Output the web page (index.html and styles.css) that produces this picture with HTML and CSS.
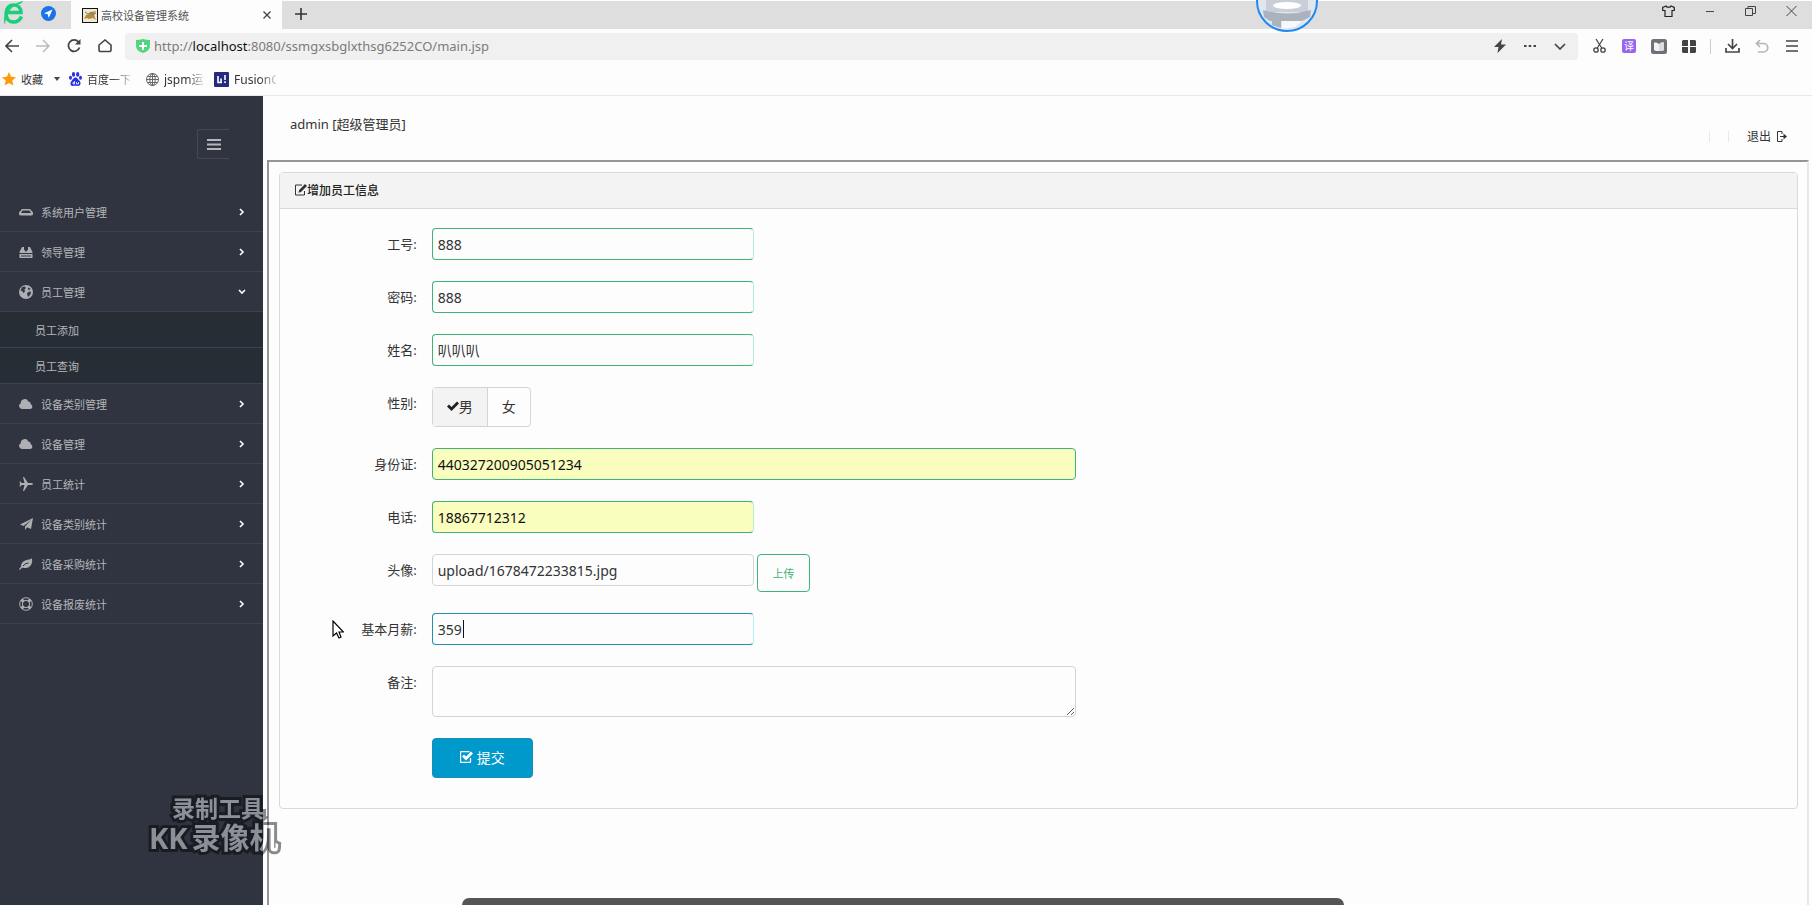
FILE: index.html
```html
<!DOCTYPE html>
<html lang="zh-CN">
<head>
    <meta charset="UTF-8">
    <meta name="viewport" content="width=device-width, initial-scale=1.0">
    <title>高校设备管理系统</title>
    <link rel="stylesheet" href="styles.css">
</head>
<body>
    <header class="browser">
        <div class="tabbar">
            <div class="pinned">
                <svg class="logo" width="21" height="24" viewBox="0 0 21 24"><g fill="none" stroke="#19cf79" stroke-width="3.500"><path d="M18.500 15.500c-1.500 3.500-4.500 5.500-8 5.500C6 21 3 17.500 3 12.500S6 4 10.500 4s7.500 3 7.500 7.500H4"/></g><path d="M2 24C-2 15 6 3 20 0c-1 3-4 3-7 4C8 6 3 13 2 24z" fill="#19cf79"/></svg>
                <svg width="15" height="15" viewBox="0 0 15 15"><circle cx="7.500" cy="7.500" r="7.500" fill="#1a73e8"/><path d="M11.500 3.500 3 7.300l3.700 1L7.700 12z" fill="#fff"/></svg>
            </div>
            <div class="tab">
                <svg width="16" height="15" viewBox="0 0 16 15"><rect x=".5" y=".5" width="15" height="14" fill="#eee8d8" stroke="#111"/><path d="M2 11l2-4 3-1 2-2 5-1-2 4 2 5-3-2-4 1-2-1z" fill="#b58c3a"/><path d="M3 4l3 2 3-2 2 3 3-2" stroke="#857a6a" fill="none"/></svg>
                <span class="tab-title">高校设备管理系统</span>
                <button class="icon-btn" aria-label="关闭标签"><svg width="8" height="8" viewBox="0 0 8 8"><path d="M.5.5l7 7M7.500.5l-7 7" stroke="#444" stroke-width="1.300"/></svg></button>
            </div>
            <button class="icon-btn new-tab" aria-label="新标签"><svg width="12" height="12" viewBox="0 0 12 12"><path d="M6 0v12M0 6h12" stroke="#333" stroke-width="1.600"/></svg></button>
            <div class="window-btns">
                <button class="icon-btn" aria-label="皮肤"><svg width="13" height="12" viewBox="0 0 13 12"><path d="M4 1 .7 2.500v3H3v6h7v-6h2.300v-3L9 1 8 2.200H5z" fill="none" stroke="#222" stroke-width="1.200"/></svg></button>
                <button class="icon-btn" aria-label="最小化"><svg width="10" height="10" viewBox="0 0 10 10"><path d="M1 5.500h8" stroke="#444"/></svg></button>
                <button class="icon-btn" aria-label="还原"><svg width="11" height="10" viewBox="0 0 11 10"><path d="M.5 2.500h7v7h-7zM3 2.500v-2h7.500v7h-3" fill="none" stroke="#444"/></svg></button>
                <button class="icon-btn" aria-label="关闭"><svg width="11" height="10" viewBox="0 0 11 10"><path d="M.5 0l10 10M10.500 0l-10 10" stroke="#444"/></svg></button>
            </div>
            <svg class="avatar" width="62" height="33" viewBox="0 0 62 33"><circle cx="31" cy="1" r="29.500" fill="#e1e6ec"/><path d="M10 0h42v12H10z" fill="#c9cfd8"/><path d="M7 10q24 7 48 0l-1 7-8 4H14l-6-4z" fill="#a9b2bd"/><ellipse cx="31" cy="5.500" rx="14" ry="3.500" fill="#fff"/><path d="M16 19h9v9l-9-3z" fill="#a9b2bd"/><path d="M26 21h20l-7 6-13 2z" fill="#f6f8fa"/><circle cx="31" cy="1" r="30" fill="none" stroke="#1e88f5" stroke-width="2"/></svg>
        </div>

        <div class="toolbar">
            <div class="nav-btns">
                <button class="icon-btn" aria-label="后退"><svg width="14" height="14" viewBox="0 0 14 14"><path d="M14 7H1M7 1 1 7l6 6" fill="none" stroke="#444" stroke-width="1.600"/></svg></button>
                <button class="icon-btn" aria-label="前进"><svg width="14" height="14" viewBox="0 0 14 14"><path d="M0 7h13M7 1l6 6-6 6" fill="none" stroke="#bbb" stroke-width="1.500"/></svg></button>
                <button class="icon-btn" aria-label="刷新"><svg width="14" height="14" viewBox="0 0 14 14"><path d="M12.500 8.500A5.700 5.700 0 1 1 11.500 3" fill="none" stroke="#444" stroke-width="1.800"/><path d="M13.500 0v5.500H8z" fill="#444"/></svg></button>
                <button class="icon-btn" aria-label="主页"><svg width="14" height="14" viewBox="0 0 14 14"><path d="M3.500 12.500h-1a1.500 1.500 0 0 1-1.500-1.500V6l6-5 6 5v5a1.500 1.500 0 0 1-1.500 1.500z" fill="none" stroke="#444" stroke-width="1.600"/></svg></button>
            </div>
            <div class="address">
                <svg width="14" height="14" viewBox="0 0 14 14"><path d="M0 1q4 0 7-1 3 1 7 1v6q0 5-7 7-7-2-7-7z" fill="#4fd67f"/><path d="M7 3v8M3 7h8" stroke="#fff" stroke-width="2"/></svg>
                <span class="url">http://<b>localhost</b>:8080/ssmgxsbglxthsg6252CO/main.jsp</span>
                <div class="address-btns">
                    <button class="icon-btn" aria-label="极速模式"><svg width="12" height="14" viewBox="0 0 12 14"><path d="M8 0 0 8h4.500L3.500 14 12 5.500H7z" fill="#444"/></svg></button>
                    <button class="icon-btn" aria-label="更多"><svg width="14" height="4" viewBox="0 0 14 4"><path d="M1 1h2.500v2H1zM5.700 1h2.500v2H5.700zM10.500 1H13v2h-2.500z" fill="#444"/></svg></button>
                    <button class="icon-btn" aria-label="展开"><svg width="12" height="7" viewBox="0 0 12 7"><path d="M1 1l5 5 5-5" fill="none" stroke="#444" stroke-width="1.700"/></svg></button>
                </div>
            </div>
            <div class="tools">
                <button class="icon-btn" aria-label="截图"><svg width="13" height="14" viewBox="0 0 13 14"><path d="M3 0l6 9.500M10 0 4 9.500" stroke="#444" stroke-width="1.200"/><g fill="none" stroke="#444" stroke-width="1.300"><circle cx="3" cy="11" r="2.200"/><circle cx="10" cy="11" r="2.200"/></g></svg></button>
                <button class="icon-btn translate">译</button>
                <button class="icon-btn" aria-label="阅读"><svg width="16" height="15" viewBox="0 0 16 15"><rect width="16" height="15" rx="2.500" fill="#707077"/><path d="M3 3.500h2.500L8 5l2.500-1.500H13V11l-2 1H5l-2-1z" fill="#f2f2f2"/><path d="M8 5l2.500-1.500H13V11l-2 1H8z" fill="#dcdcdf"/></svg></button>
                <button class="icon-btn" aria-label="应用"><svg width="14" height="13" viewBox="0 0 14 13"><path d="M1 0h5v6H0V1zM8 0h5l1 1v5H8zM0 7h6v6H1l-1-1zM8 7h6v5l-1 1H8z" fill="#444"/></svg></button>
                <span class="tool-line"></span>
                <button class="icon-btn" aria-label="下载"><svg width="15" height="14" viewBox="0 0 15 14"><path d="M7.500 0v9M3 5l4.500 4.500L12 5M1 9v4h13V9" fill="none" stroke="#444" stroke-width="1.700"/></svg></button>
                <button class="icon-btn" aria-label="撤销"><svg width="14" height="13" viewBox="0 0 14 13"><path d="M5 0 1.500 3.500 5 7M1.500 3.500H8.500a4 4 0 0 1 0 8.500H3" fill="none" stroke="#b5b5b5" stroke-width="1.700"/></svg></button>
                <button class="icon-btn" aria-label="菜单"><svg width="12" height="12" viewBox="0 0 12 12"><path d="M0 1h12M0 6h12M0 11h12" stroke="#444" stroke-width="1.600"/></svg></button>
            </div>
        </div>

        <nav class="bookmarks">
            <a class="mark mark-fav" href="#"><svg width="14" height="14" viewBox="0 0 14 14"><path d="M7 0l2.100 4.700 4.900.5-3.700 3.300 1.100 5L7 11l-4.400 2.500 1.100-5L0 5.200l4.900-.5z" fill="#ff9a0c"/></svg>收藏<i class="caret"></i></a>
            <a class="mark mark-baidu" href="#"><svg width="13" height="14" viewBox="0 0 13 14"><g fill="#2b32dc"><ellipse cx="4.500" cy="2.400" rx="1.600" ry="2.300"/><ellipse cx="8.700" cy="2.400" rx="1.600" ry="2.300"/><ellipse cx="1.500" cy="5.700" rx="1.500" ry="2"/><ellipse cx="11.500" cy="5.700" rx="1.500" ry="2"/><path d="M6.500 5.500c2 0 2.500 2 4 3.300 2 2 1 5.200-1.500 5.200-1.500 0-3.500-.5-5 0C1.500 14.500.5 11 2.500 9 4 7.500 4.500 5.500 6.500 5.500z"/></g><path d="M5.500 9v3H4v-1.500h1.500M7.500 10v2h2v-2" fill="none" stroke="#fff" stroke-width=".8"/></svg><span class="mark-text">百度一下</span></a>
            <a class="mark mark-jspm" href="#"><svg width="13" height="13" viewBox="0 0 13 13"><g fill="none" stroke="#666"><circle cx="6.500" cy="6.500" r="6"/><ellipse cx="6.500" cy="6.500" rx="2.700" ry="6"/><path d="M.5 6.500h12M6.500.5v12M1.500 3.500h10M1.500 9.500h10"/></g></svg><span class="mark-text">jspm运</span></a>
            <a class="mark mark-fusion" href="#"><svg width="15" height="15" viewBox="0 0 15 15"><rect width="15" height="15" rx="1" fill="#242a7c"/><path d="M4 4v6.500h4M7 6.500v4M11 3v5M11 9.300V11" fill="none" stroke="#fff" stroke-width="1.600"/></svg><span class="mark-text">FusionC</span></a>
        </nav>
    </header>

    <div class="page">
        <aside class="sidebar">
            <button class="menu-toggle" aria-label="菜单"><svg width="14" height="11" viewBox="0 0 14 11"><path d="M0 1h14M0 5.500h14M0 10h14" stroke="#b4b6ba" stroke-width="2"/></svg></button>
            <nav class="menu">
                <a href="#"><svg class="icon" viewBox="0 0 14 14"><path d="M3 4h8l3 3.500V9q0 1.500-2 1.500H2Q0 10.500 0 9V7.500zM3.500 5.500 2 8h10l-1.500-2.500z" fill-rule="evenodd"/></svg>系统用户管理<svg class="arrow" viewBox="0 0 8 8"><path d="M2 1l3 3-3 3"/></svg></a>
                <a href="#"><svg class="icon" viewBox="0 0 14 14"><path d="M3 2h2v2.500L7 7l2-2.500V2h2l2.500 5v1H.5V7zM.5 9h13v4H.5zM2 10.500h10v1H2z" fill-rule="evenodd"/></svg>领导管理<svg class="arrow" viewBox="0 0 8 8"><path d="M2 1l3 3-3 3"/></svg></a>
                <a href="#"><svg class="icon" viewBox="0 0 14 14"><circle cx="7" cy="7" r="7"/><path d="M3 2l3-.5L7 3 5.500 4.500 6 6.500 4.500 8 3 6 1.500 5.500zM9 2.500l2.500 1L10 5.500 9 4zM9 7l3-.5-.5 3L9 12 8 9z" fill="#343844"/></svg>员工管理<svg class="arrow" viewBox="0 0 8 8"><path d="M1 2l3 3 3-3"/></svg></a>
                <div class="submenu">
                    <a href="#">员工添加</a>
                    <a href="#">员工查询</a>
                </div>
                <a href="#"><svg class="icon" viewBox="0 0 14 14"><path d="M3 12a3 3 0 0 1-1.200-5.700A3.900 3.900 0 0 1 9.300 4.500a2.200 2.200 0 0 1 2.300 2.700A2.500 2.500 0 0 1 11.500 12z"/></svg>设备类别管理<svg class="arrow" viewBox="0 0 8 8"><path d="M2 1l3 3-3 3"/></svg></a>
                <a href="#"><svg class="icon" viewBox="0 0 14 14"><path d="M3 12a3 3 0 0 1-1.200-5.700A3.900 3.900 0 0 1 9.300 4.500a2.200 2.200 0 0 1 2.300 2.700A2.500 2.500 0 0 1 11.500 12z"/></svg>设备管理<svg class="arrow" viewBox="0 0 8 8"><path d="M2 1l3 3-3 3"/></svg></a>
                <a href="#"><svg class="icon" viewBox="0 0 14 14"><path d="M14 7q0 1-2 1H9l-4 6H4l1.500-6h-3L1.500 9.500H.5L1 7 .5 4.500h1L2.500 6h3L4 0h1l4 6h3q2 0 2 1z"/></svg>员工统计<svg class="arrow" viewBox="0 0 8 8"><path d="M2 1l3 3-3 3"/></svg></a>
                <a href="#"><svg class="icon" viewBox="0 0 14 14"><path d="M14 1l-2 11-4-1.700L6 13V9.500L12 3 4.500 9 1 7.500z"/></svg>设备类别统计<svg class="arrow" viewBox="0 0 8 8"><path d="M2 1l3 3-3 3"/></svg></a>
                <a href="#"><svg class="icon" viewBox="0 0 14 14"><path d="M13 1.500c1 5-2 9.500-6 9.500-2 0-3-.5-4-.3L1 13 0 12.300l2-2.800C2 4 7 3 10 2.500c2-.5 2-1 3-1z"/><path d="M4 9q2-3 5.500-3" stroke="#2f3440" fill="none"/></svg>设备采购统计<svg class="arrow" viewBox="0 0 8 8"><path d="M2 1l3 3-3 3"/></svg></a>
                <a href="#"><svg class="icon" viewBox="0 0 14 14"><g fill="none" stroke="#adafb2"><circle cx="7" cy="7" r="6.300"/><circle cx="7" cy="7" r="3.700"/><path d="M2.500 2.500 4.700 4.700M11.500 2.500 9.300 4.700M2.500 11.500l2.200-2.200M11.500 11.500 9.300 9.300" stroke-width="3"/></g></svg>设备报废统计<svg class="arrow" viewBox="0 0 8 8"><path d="M2 1l3 3-3 3"/></svg></a>
            </nav>
        </aside>

        <main class="main">
            <div class="userbar">
                <div class="user">admin [超级管理员]</div>
                <div class="user-links">
                    <span class="line"></span>
                    <span class="line"></span>
                    <a href="#">退出 <svg width="11" height="11" viewBox="0 0 11 11"><path d="M6 .5H1.500v10H6M6 .5V3M6 8v2.500M4 5.500h5" fill="none" stroke="#333"/><path d="M7.500 2.500 11 5.500l-3.500 3z" fill="#333"/></svg></a>
                </div>
            </div>

            <div class="frame">
                <section class="panel">
                    <h3 class="panel-title"><svg width="13" height="12" viewBox="0 0 13 12"><path d="M8 1H1.500v10h9V7" fill="none" stroke="#333"/><path d="M11 0l2 2-6 6-2.500.7L5.200 6z" fill="#333"/></svg>增加员工信息</h3>
                    <form class="panel-body">
                        <div class="form-group">
                            <label for="gonghao">工号:</label>
                            <div class="field"><input class="valid short" type="text" id="gonghao" value="888"></div>
                        </div>
                        <div class="form-group">
                            <label for="mima">密码:</label>
                            <div class="field"><input class="valid short" type="text" id="mima" value="888"></div>
                        </div>
                        <div class="form-group">
                            <label for="xingming">姓名:</label>
                            <div class="field"><input class="valid short" type="text" id="xingming" value="叭叭叭"></div>
                        </div>
                        <div class="form-group">
                            <label for="nan">性别:</label>
                            <div class="btn-group">
                                <input type="radio" name="xingbie" id="nan" checked>
                                <label for="nan"><svg width="12" height="10" viewBox="0 0 12 10"><path d="M0 5.500 2 3.500 4.500 6 10 .5 12 2.500 4.500 10z" fill="#222"/></svg>男</label>
                                <input type="radio" name="xingbie" id="nv">
                                <label for="nv">女</label>
                            </div>
                        </div>
                        <div class="form-group">
                            <label for="shenfenzheng">身份证:</label>
                            <div class="field"><input class="valid filled" type="text" id="shenfenzheng" value="440327200905051234"></div>
                        </div>
                        <div class="form-group">
                            <label for="dianhua">电话:</label>
                            <div class="field"><input class="valid filled short" type="text" id="dianhua" value="18867712312"></div>
                        </div>
                        <div class="form-group">
                            <label for="touxiang">头像:</label>
                            <div class="field"><input class="short" type="text" id="touxiang" value="upload/1678472233815.jpg"><button class="upload" type="button">上传</button></div>
                        </div>
                        <div class="form-group">
                            <label for="yuexin">基本月薪:</label>
                            <div class="field"><input class="active short" type="text" id="yuexin" value="359"><span class="text-cursor"></span></div>
                        </div>
                        <div class="form-group">
                            <label for="beizhu">备注:</label>
                            <div class="field"><textarea id="beizhu"></textarea></div>
                        </div>
                        <button class="submit" type="button"><svg width="13" height="12" viewBox="0 0 13 12"><path d="M10.500 7v3.500a1 1 0 0 1-1 1h-8a1 1 0 0 1-1-1v-9a1 1 0 0 1 1-1h8" fill="none" stroke="#fff" stroke-width="1.300"/><path d="M2 5.500l2-2L6 5.500 11 .5l2 2L6 9.500z" fill="#fff"/></svg>提交</button>
                    </form>
                </section>
            </div>
        </main>
    </div>

    <div class="watermark">
        <div class="wm-small">录制工具</div>
        <div class="wm-big"><span>KK</span><span>录像机</span></div>
    </div>
    <div class="bottom-bar"></div>
    <svg class="pointer" width="12" height="19" viewBox="0 0 12 19"><path d="M1 1v15l3.500-3L7 18l2-1-2-5h4.500z" fill="#fff" stroke="#000" stroke-width="1.200"/></svg>
</body>
</html>
```
FILE: styles.css
```css
* {
    box-sizing: border-box;
}
body {
    margin: 0;
    height: 100vh;
    display: flex;
    flex-direction: column;
    overflow: hidden;
    position: relative;
    background: #fdfdfd;
    color: #333;
    font-family: "Noto Sans", "Noto Sans CJK SC", sans-serif;
    font-size: 12px;
}
a {
    color: inherit;
    text-decoration: none;
}
svg {
    flex: none;
}
button, input, textarea {
    font-family: inherit;
}
.icon-btn {
    display: flex;
    justify-content: center;
    align-items: center;
    padding: 0;
    border: none;
    background: none;
}

/* browser */
.browser {
    border-bottom: 1px solid #e8e8e8;
}
.tabbar {
    display: flex;
    position: relative;
    height: 29px;
    border-top: 1px solid #fdfdfd;
    background: #dedede;
}
.pinned {
    display: flex;
    align-items: center;
    gap: 17px;
    width: 71px;
    padding: 0 0 4px 3px;
}
.tab {
    display: flex;
    align-items: center;
    gap: 3px;
    width: 211px;
    padding: 0 11px;
    background: #fdfdfd;
    font-size: 11px;
    color: #555;
}
.tab-title {
    flex: 1;
}
.new-tab {
    width: 38px;
    height: 26px;
}
.window-btns {
    display: flex;
    height: 20px;
    margin-left: auto;
}
.window-btns .icon-btn {
    width: 41px;
}
.avatar {
    position: absolute;
    top: -1px;
    left: 71%;
    margin-left: -31px;
    z-index: 1;
}
.toolbar {
    display: flex;
    align-items: center;
    height: 34px;
}
.nav-btns {
    display: flex;
    gap: 17px;
    width: 125px;
    padding-left: 5px;
}
.address {
    flex: 1;
    display: flex;
    align-items: center;
    gap: 4px;
    height: 27px;
    padding: 0 3px 0 11px;
    border-radius: 4px;
    background: #f0f0f0;
}
.url {
    flex: 1;
    font-size: 13px;
    color: #7b7b7b;
}
.url b {
    font-weight: normal;
    color: #111;
}
.address-btns, .tools {
    display: flex;
    align-items: center;
}
.address-btns .icon-btn, .tools .icon-btn {
    width: 30px;
}
.tools {
    padding: 0 5px 0 6px;
}
.tools .translate {
    width: 14px;
    height: 14px;
    margin: 0 8px;
    border-radius: 2px;
    background: #9566f0;
    color: #fff;
    font-size: 10px;
    line-height: 14px;
}
.tool-line {
    width: 1px;
    height: 15px;
    margin: 0 6px;
    background: #ccc;
}
.bookmarks {
    display: flex;
    align-items: center;
    height: 32px;
    padding-left: 2px;
}
.mark {
    display: flex;
    align-items: center;
    gap: 5px;
}
.mark-fav {
    width: 67px;
    font-size: 11px;
}
.mark-baidu {
    width: 77px;
    font-size: 11px;
}
.mark-jspm {
    width: 68px;
}
.mark-text {
    -webkit-mask-image: linear-gradient(to right, #000 60%, rgba(0,0,0,0.2));
    mask-image: linear-gradient(to right, #000 60%, rgba(0,0,0,0.2));
}
.mark-fusion .mark-text {
    max-width: 42px;
    overflow: hidden;
}
.caret {
    margin-left: 6px;
    border: 3px solid transparent;
    border-top: 4px solid #444;
    border-bottom: none;
}

/* sidebar */
.page {
    flex: 1;
    display: flex;
    min-height: 0;
}
.sidebar {
    width: 263px;
    background: #2f3440;
    color: #b4b6ba;
    font-size: 11px;
}
.menu-toggle {
    display: flex;
    justify-content: center;
    align-items: center;
    width: 32px;
    height: 30px;
    margin: 33px 34px 33px auto;
    padding: 0;
    border: 1px solid #454a55;
    border-right: none;
    border-radius: 3px 0 0 3px;
    background: none;
}
.menu a {
    display: flex;
    align-items: center;
    gap: 8px;
    height: 40px;
    padding: 0 17px 0 19px;
    border-bottom: 1px solid #3d424e;
}
.menu .submenu a {
    height: 36px;
    padding-left: 35px;
    background: #272d35;
}
.icon {
    width: 14px;
    height: 14px;
    fill: #adafb2;
}
.arrow {
    width: 8px;
    height: 8px;
    margin-left: auto;
    fill: none;
    stroke: #fff;
    stroke-width: 1.600px;
}

/* content */
.main {
    flex: 1;
    display: flex;
    flex-direction: column;
    padding: 0 3px 0 4px;
}
.userbar {
    display: flex;
    justify-content: space-between;
    height: 64px;
    padding: 18px 22px 0 23px;
}
.user {
    font-size: 13px;
    line-height: 20px;
}
.user-links {
    display: flex;
    align-items: center;
    gap: 18px;
    height: 44px;
    font-size: 12px;
}
.user-links a {
    display: flex;
    align-items: center;
    gap: 5px;
}
.line {
    width: 1px;
    height: 11px;
    background: #e8e8e8;
}
.frame {
    flex: 1;
    padding: 10px 9px 10px 10px;
    border: 2px solid #e8e8e8;
    border-top-color: #959595;
    border-left-color: #959595;
    border-bottom: none;
}
.panel {
    border: 1px solid #d9d9d9;
    border-radius: 4px;
}
.panel-title {
    display: flex;
    align-items: center;
    height: 36px;
    margin: 0;
    padding: 0 0 2px 14px;
    border-bottom: 1px solid #d9d9d9;
    background: #f3f3f3;
    font-size: 12px;
    font-weight: 500;
    color: #222;
}
.panel-body {
    padding: 19px 0 30px;
}
.form-group {
    display: flex;
    align-items: flex-start;
    margin-bottom: 21px;
}
.form-group > label {
    width: 10%;
    padding-right: 15px;
    font-size: 13px;
    line-height: 32px;
    text-align: right;
}
.field {
    display: flex;
    align-items: flex-start;
    gap: 3px;
    position: relative;
    width: 42.5%;
}
.field input, .field textarea {
    width: 100%;
    height: 32px;
    padding: 0 5px;
    border: 1px solid #d4d4d4;
    border-radius: 4px;
    outline: none;
    background: #fdfdfd;
    color: #333;
    font-size: 14px;
}
.field .short {
    width: 50%;
}
.field textarea {
    display: block;
    height: 51px;
}
.field .valid {
    border-color: #3fb37a;
}
.field .valid.short {
    border-right-color: #b5f0d5;
}
.field .filled {
    background: #f9fdbd;
    color: #111;
}
.field .active {
    border-color: #2490b0;
    border-right-color: #b5edf5;
}
.text-cursor {
    position: absolute;
    top: 7px;
    left: 31px;
    width: 1px;
    height: 18px;
    background: #111;
}
.btn-group {
    display: flex;
    height: 40px;
    border: 1px solid #d4d4d4;
    border-radius: 4px;
    font-size: 14px;
}
.btn-group input {
    position: absolute;
    opacity: 0;
}
.btn-group label {
    display: flex;
    align-items: center;
    padding: 0 14px 2px;
}
.btn-group input:checked + label {
    border-right: 1px solid #d4d4d4;
    background: #f3f3f3;
}
.upload {
    width: 53px;
    height: 38px;
    padding: 0;
    border: 1px solid #3fb37a;
    border-radius: 4px;
    background: #fdfdfd;
    color: #3fb37a;
    font-size: 11px;
}
.submit {
    display: flex;
    justify-content: center;
    align-items: center;
    gap: 4px;
    width: 101px;
    height: 40px;
    margin-left: 10%;
    padding: 0 0 2px;
    border: 1px solid #1a8db5;
    border-radius: 4px;
    background: #0099cc;
    color: #fff;
    font-size: 14px;
}

/* things over the page */
.watermark {
    position: absolute;
    top: 793px;
    left: 149px;
    opacity: 0.45;
    color: #fff;
    font-weight: bold;
    -webkit-text-stroke: 6px #000;
    paint-order: stroke fill;
}
.wm-small {
    padding-left: 23px;
    font-size: 23px;
    line-height: 30px;
}
.wm-big {
    display: flex;
    gap: 4px;
    font-size: 29px;
    line-height: 30px;
}
.bottom-bar {
    position: absolute;
    left: 462px;
    right: 468px;
    bottom: 0;
    height: 7px;
    border-radius: 12px 12px 0 0;
    background: #555;
}
.pointer {
    position: absolute;
    top: 620px;
    left: 332px;
}
```
